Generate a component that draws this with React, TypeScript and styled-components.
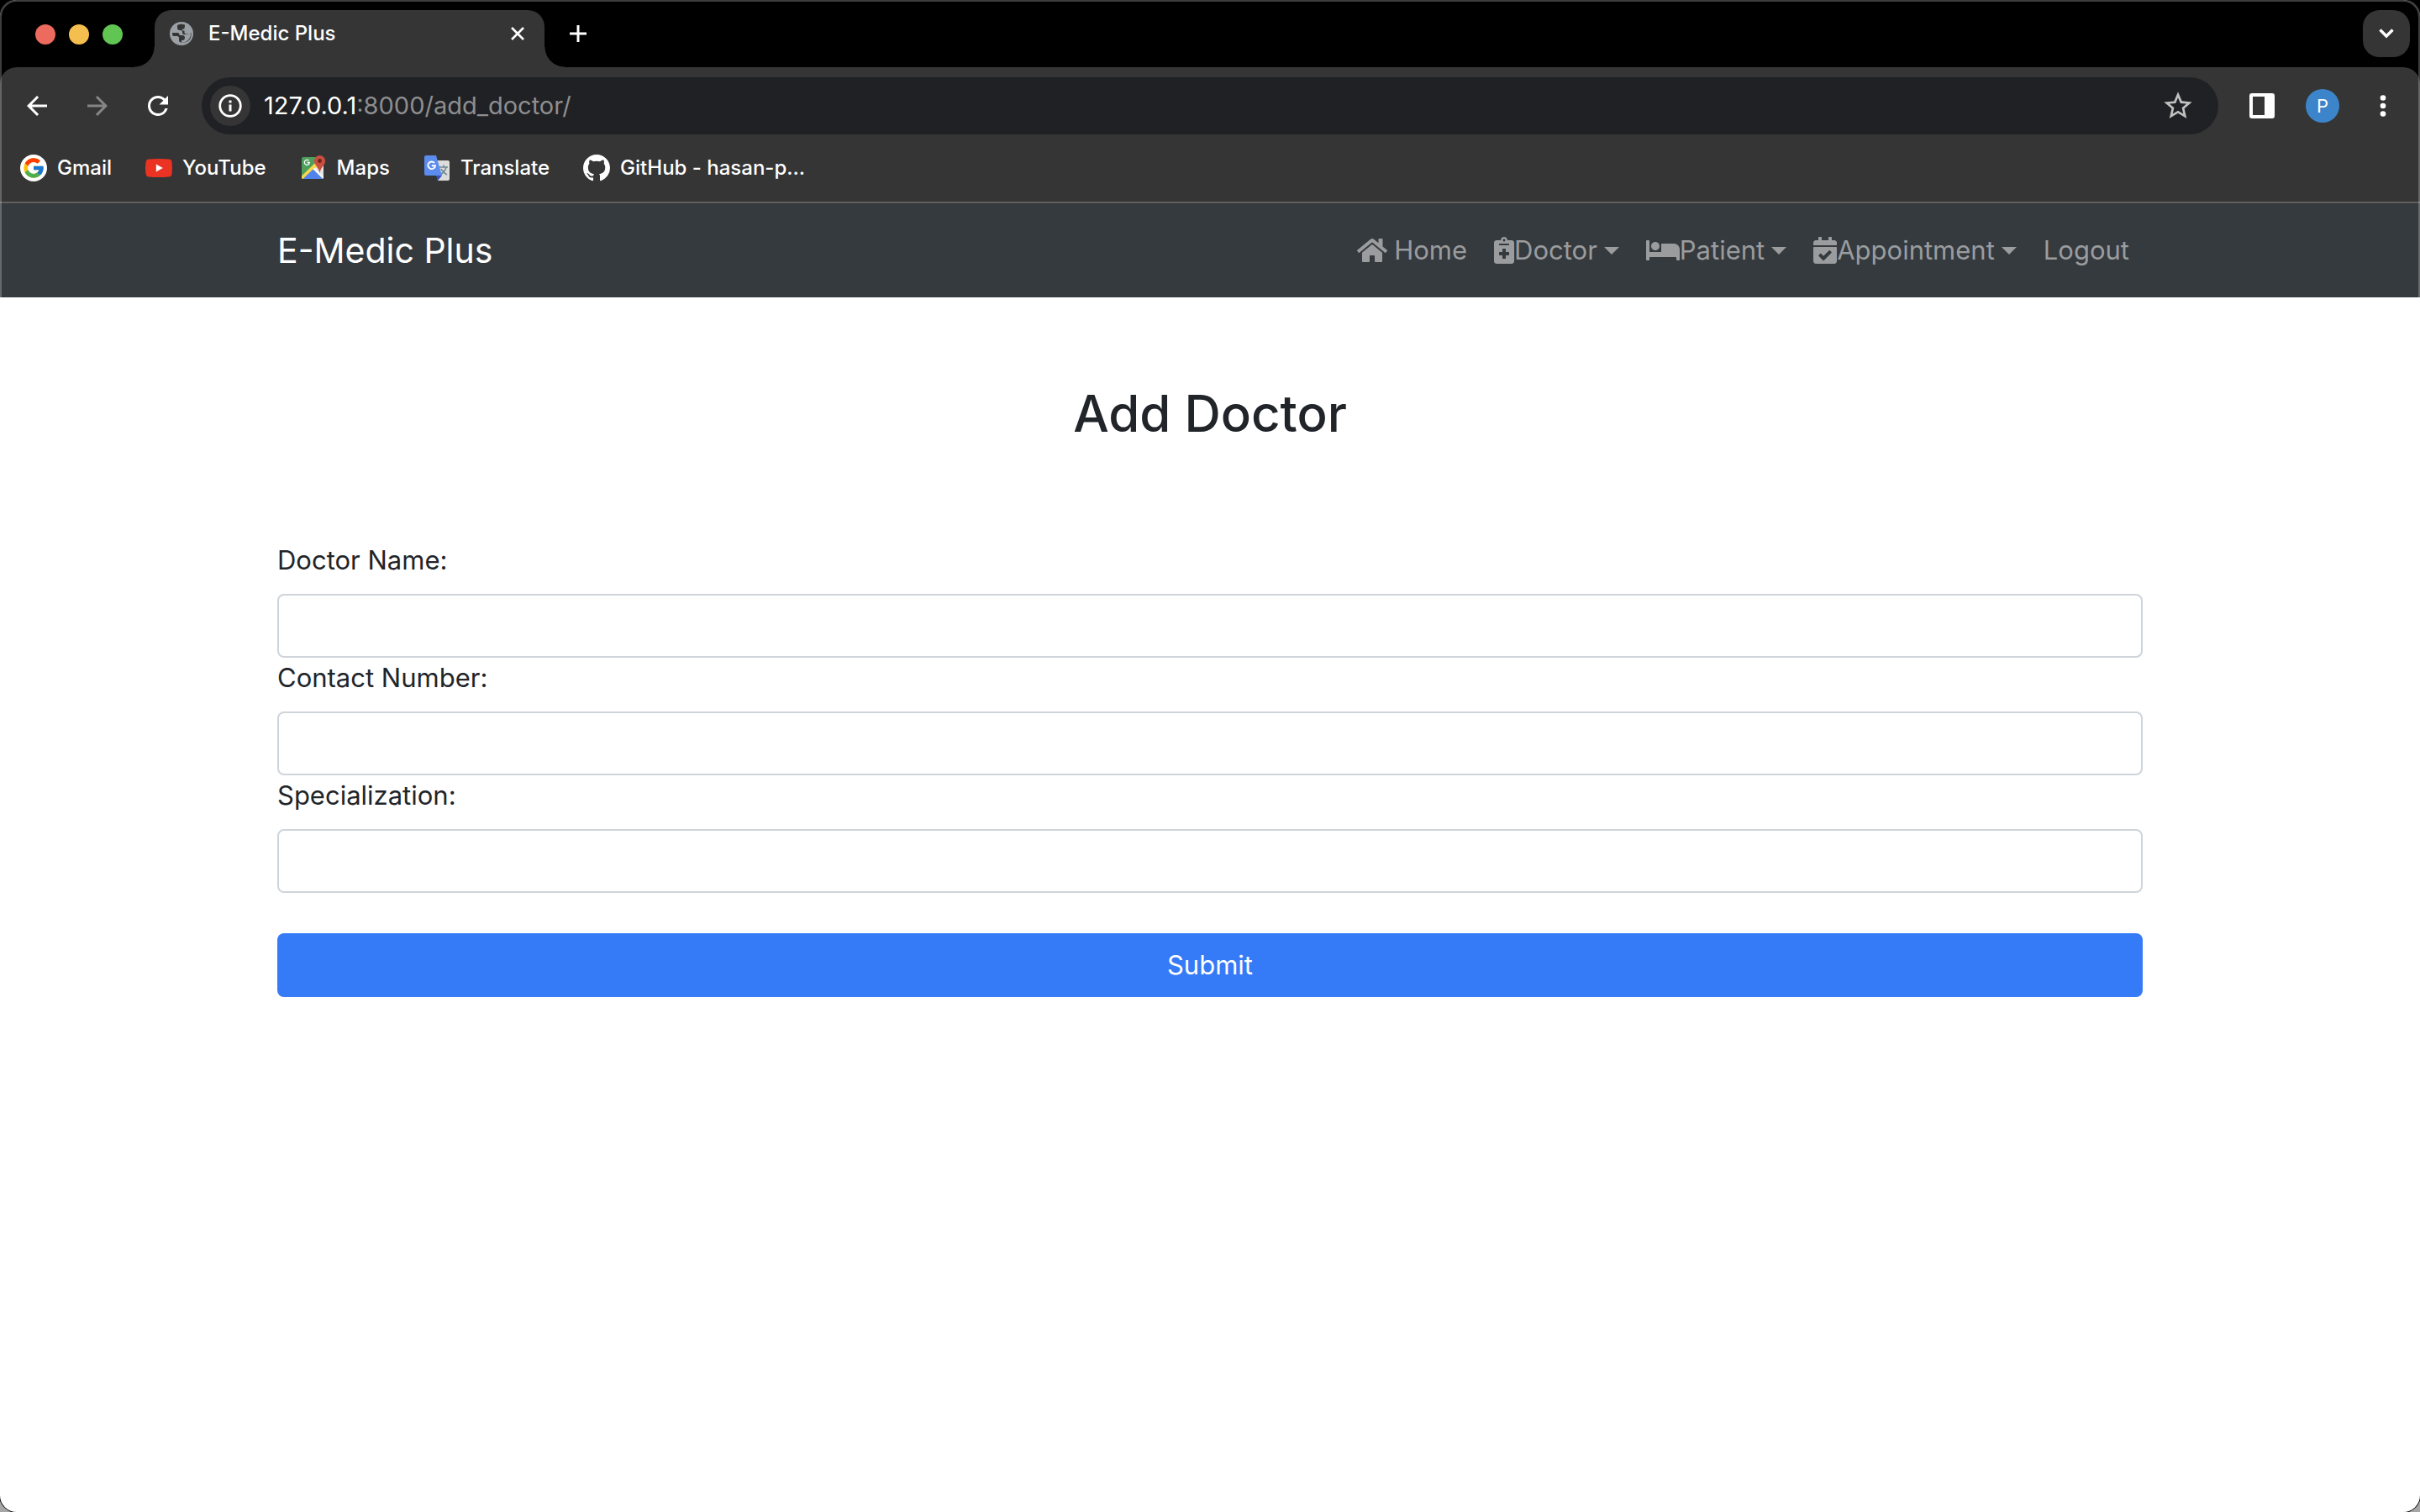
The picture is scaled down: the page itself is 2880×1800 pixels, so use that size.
import React from "react";
import styled, { createGlobalStyle } from "styled-components";
import { FaHome, FaNotesMedical, FaBed, FaCalendarCheck } from "react-icons/fa";
import { FcGoogle } from "react-icons/fc";
import { MdArrowBack, MdArrowForward, MdRefresh, MdStarBorder } from "react-icons/md";

const GlobalStyle = createGlobalStyle`
  *, *::before, *::after { box-sizing: border-box; }
  body {
    margin: 0;
    background: linear-gradient(#000 50%, #a6a6a6 50%);
    color: #212529;
    font-family: Inter, "Liberation Sans", sans-serif;
    font-size: 31px;
    line-height: 48px;
  }
  button, input { font: inherit; color: inherit; }
  button { border: 0; padding: 0; background: none; cursor: pointer; }
  a { color: inherit; text-decoration: none; }
  svg { display: block; flex: none; }
`;

const Window = styled.div`
  position: relative;
  display: flex;
  flex-direction: column;
  min-height: 100vh;
  border-radius: 20px;
  overflow: hidden;
  background: #fff;
  box-shadow: 0 0 0 1px #111;
  &::after {
    content: "";
    position: absolute;
    inset: 0;
    border: 2px solid rgba(255, 255, 255, 0.24);
    border-radius: 20px;
    pointer-events: none;
  }
`;

const Chrome = styled.header`
  background: #000;
  color: #fff;
`;

const TabStrip = styled.div`
  display: flex;
  align-items: center;
  height: 80px;
  padding: 12px 12px 0 42px;
`;

const Lights = styled.div`
  display: flex;
  gap: 16px;
  margin-right: 38px;
  padding-bottom: 10px;
`;

const Light = styled.button<{ $color: string }>`
  width: 24px;
  height: 24px;
  border-radius: 50%;
  background: ${(p) => p.$color};
`;

const Tab = styled.div`
  position: relative;
  display: flex;
  align-items: center;
  gap: 18px;
  width: 464px;
  height: 68px;
  padding: 0 24px 12px 18px;
  border-radius: 20px 20px 0 0;
  background: #353535;
  font-size: 24px;
  font-weight: 500;
  line-height: 32px;
  &::before, &::after {
    content: "";
    position: absolute;
    bottom: 0;
    width: 24px;
    height: 24px;
  }
  &::before {
    right: 100%;
    background: radial-gradient(circle at 0 0, transparent 23px, #353535 24px);
  }
  &::after {
    left: 100%;
    background: radial-gradient(circle at 100% 0, transparent 23px, #353535 24px);
  }
`;

const TabTitle = styled.span`
  flex: 1;
`;

const NewTab = styled.button`
  margin-left: 30px;
  padding-bottom: 12px;
`;

const TabSearch = styled.button`
  display: grid;
  place-items: center;
  width: 56px;
  height: 56px;
  margin: 0 0 12px auto;
  border-radius: 20px;
  background: #353535;
`;

const Toolbar = styled.div`
  display: flex;
  align-items: center;
  height: 92px;
  padding: 0 26px;
  border-radius: 20px 20px 0 0;
  background: #353535;
`;

const NavButtons = styled.div`
  display: flex;
  gap: 36px;
  margin-right: 34px;
`;

const ToolButton = styled.button<{ $dim?: boolean }>`
  display: grid;
  place-items: center;
  width: 36px;
  height: 36px;
  color: ${(p) => (p.$dim ? "#868686" : "#fff")};
`;

const AddressBar = styled.div`
  display: flex;
  flex: 1;
  align-items: center;
  height: 68px;
  padding: 0 28px 0 10px;
  border-radius: 34px;
  background: #202124;
  color: #fff;
  font-size: 29px;
  line-height: 40px;
`;

const SiteInfo = styled.button`
  display: grid;
  place-items: center;
  width: 48px;
  height: 48px;
  margin-right: 16px;
  border-radius: 50%;
  background: #353535;
`;

const Address = styled.div`
  flex: 1;
`;

const AddressPath = styled.span`
  color: #8e8e90;
`;

const StarButton = styled.button`
  color: #c1c1c1;
`;

const Actions = styled.div`
  display: flex;
  align-items: center;
  gap: 34px;
  margin-left: 34px;
`;

const Avatar = styled.button`
  width: 40px;
  height: 40px;
  border-radius: 50%;
  background: #3c85cb;
  color: #fff;
  font-size: 22px;
  line-height: 40px;
`;

const Bookmarks = styled.nav`
  display: flex;
  align-items: flex-start;
  gap: 40px;
  height: 70px;
  padding: 12px 24px 0;
  border-bottom: 2px solid #5f5f5f;
  background: #353535;
`;

const Bookmark = styled.a`
  display: flex;
  align-items: center;
  gap: 12px;
  font-size: 24px;
  font-weight: 500;
  line-height: 32px;
`;

const GoogleDisc = styled.span`
  display: grid;
  place-items: center;
  width: 32px;
  height: 32px;
  border-radius: 50%;
  background: #fff;
`;

const Container = styled.div`
  width: 100%;
  max-width: 2280px;
  margin: 0 auto;
  padding: 0 30px;
`;

const Navbar = styled.nav`
  padding: 16px 0;
  background: #353a3e;
`;

const NavbarInner = styled(Container)`
  display: flex;
  align-items: center;
  justify-content: space-between;
`;

const Brand = styled.a`
  color: #fff;
  font-size: 41px;
  line-height: 60px;
`;

const NavList = styled.ul`
  display: flex;
  margin: 0;
  padding: 0;
  list-style: none;
`;

const NavLink = styled.a<{ $iconWidth?: number; $gap?: boolean }>`
  display: flex;
  align-items: center;
  padding: 16px;
  color: #9a9c9e;
  & > svg {
    width: ${(p) => p.$iconWidth}px;
    height: 32px;
    margin-right: ${(p) => (p.$gap ? "8px" : "0")};
  }
`;

const Caret = styled.span`
  margin-left: 8px;
  border-top: 9px solid;
  border-left: 9px solid transparent;
  border-right: 9px solid transparent;
`;

const Title = styled.h1`
  margin: 100px 0 112px;
  font-size: 60px;
  font-weight: 500;
  line-height: 77px;
  text-align: center;
`;

const Field = styled.div`
  display: flex;
  flex-direction: column;
  gap: 16px;
`;

const Input = styled.input`
  width: 100%;
  height: 76px;
  padding: 12px 24px;
  border: 2px solid #ced4da;
  border-radius: 8px;
  background: #fff;
  outline: none;
`;

const Submit = styled.button`
  width: 100%;
  height: 76px;
  margin-top: 48px;
  border-radius: 8px;
  background: #357af6;
  color: #fff;
`;

const Globe = () => (
  <svg width="28" height="28" viewBox="0 0 28 28" aria-hidden="true">
    <circle cx="14" cy="14" r="14" fill="#9aa0a6" />
    <path
      d="M16 3C14 2.600 11 3 9 4v3c0 2 1 3 3 3h1c1 0 2 1 2 2v1c0 1 1 2 2 2h4c2 0 3-1 4-2 .5 6-4 12-11 12v-3h1c2 0 3-1 3-3s-1-3-3-3h-2c-1 0-2-1-2-2s-1-1-2-1H3c0 1 0 3 1 4h5c1 0 2 1 2 2v4c1 1 3 2 5 2 7-1 10-5 9.500-12-1 1-2 1.500-3 1.500h-3c-1 0-2-1-2-2v-2h-2c-1 0-1-2 0-2h1c1 0 1.500-2 1.500-5z"
      fill="#353535"
    />
  </svg>
);

const CloseIcon = () => (
  <svg width="16" height="16" viewBox="0 0 16 16" stroke="#fff" strokeWidth="2.6" aria-hidden="true">
    <path d="M1 1l14 14M15 1L1 15" />
  </svg>
);

const PlusIcon = () => (
  <svg width="20" height="20" viewBox="0 0 20 20" stroke="#fff" strokeWidth="3" aria-hidden="true">
    <path d="M10 0v20M0 10h20" />
  </svg>
);

const ChevronIcon = () => (
  <svg width="18" height="12" viewBox="0 0 18 12" fill="none" stroke="#fff" strokeWidth="3.4" aria-hidden="true">
    <path d="M1.5 1.5L9 9l7.5-7.5" />
  </svg>
);

const InfoIcon = () => (
  <svg width="28" height="28" viewBox="0 0 28 28" aria-hidden="true">
    <circle cx="14" cy="14" r="12.3" fill="none" stroke="#fff" strokeWidth="2.8" />
    <path d="M12.500 12.500h3v8h-3zM12.500 7.500h3v3h-3z" fill="#fff" />
  </svg>
);

const PanelIcon = () => (
  <svg width="30" height="30" viewBox="0 0 30 30" aria-hidden="true">
    <path fillRule="evenodd" d="M3 0h24a3 3 0 0 1 3 3v24a3 3 0 0 1-3 3H3a3 3 0 0 1-3-3V3a3 3 0 0 1 3-3zM4 4v22h14V4z" fill="#fff" />
  </svg>
);

const DotsIcon = () => (
  <svg width="8" height="28" viewBox="0 0 8 28" fill="#fff" aria-hidden="true">
    <circle cx="4" cy="4.5" r="3.3" />
    <circle cx="4" cy="14" r="3.3" />
    <circle cx="4" cy="23.5" r="3.3" />
  </svg>
);

const StarIcon = () => (
  <MdStarBorder size={40} />
);

const YouTubeIcon = () => (
  <svg width="32" height="32" viewBox="0 0 32 32" aria-hidden="true">
    <path d="M4 5.500Q16 4.300 28 5.500q3 .3 3.500 3.500.9 7 0 14-.5 3.200-3.500 3.500-12 1.200-24 0Q1 26.200.5 23-.4 16 .5 9 1 5.800 4 5.500z" fill="#ea3323" />
    <path d="M12.800 11.500v9l8-4.500z" fill="#fff" />
  </svg>
);

const MapsIcon = () => (
  <svg width="32" height="32" viewBox="0 0 32 32" aria-hidden="true">
    <rect x="2" y="3" width="26" height="26" rx="2" fill="#4f9f5c" />
    <path d="M15 17L28 7v20z" fill="#e4e4e4" />
    <path d="M2 25.500L19 9l3.500 3.500L5 29H3l-1-1z" fill="#f7d84a" />
    <path d="M18 15.500L28 26v2l-1 1L15 17.500z" fill="#f4f4f4" />
    <path d="M3.500 29L15.500 17.500 27 29z" fill="#5283ec" />
    <path d="M10.500 7.300a3 3 0 1 0 .8 2.200H8.600" fill="none" stroke="#fff" strokeWidth="1.3" />
    <path d="M23.500 1a6.600 6.600 0 0 1 6.600 6.600c0 5-5 7-6.600 14.400-1.600-7.400-6.600-9.400-6.600-14.400A6.600 6.600 0 0 1 23.500 1z" fill="#c94f40" />
    <circle cx="23.5" cy="7.5" r="2.4" fill="#6f2218" />
  </svg>
);

const TranslateIcon = () => (
  <svg width="32" height="32" viewBox="0 0 32 32" aria-hidden="true">
    <path d="M13 7h16a2 2 0 0 1 2 2v20a2 2 0 0 1-2 2H17z" fill="#dcdcdc" />
    <path d="M19 15h10M24 12.500V15M27 15c-1 4-4 7-7 9M21 17c1 3 4 5 7 7" fill="none" stroke="#6f8894" strokeWidth="1.6" />
    <path d="M15 25h7l-5 6z" fill="#3551b6" />
    <path d="M3 1h12l7 24H3a2 2 0 0 1-2-2V3a2 2 0 0 1 2-2z" fill="#5c8cee" />
    <path d="M13 10a4.300 4.300 0 1 0 1 3.300h-4.200" fill="none" stroke="#fff" strokeWidth="1.9" />
  </svg>
);

const GitHubIcon = () => (
  <svg width="32" height="32" viewBox="0 0 16 16" fill="#fff" aria-hidden="true">
    <path d="M8 0C3.58 0 0 3.58 0 8c0 3.54 2.29 6.53 5.47 7.59.4.07.55-.17.55-.38 0-.19-.01-.82-.01-1.49-2.01.37-2.53-.49-2.69-.94-.09-.23-.48-.94-.82-1.13-.28-.15-.68-.52-.01-.53.63-.01 1.08.58 1.23.82.72 1.21 1.87.87 2.33.66.07-.52.28-.87.51-1.07-1.78-.2-3.64-.89-3.64-3.95 0-.87.31-1.59.82-2.15-.08-.2-.36-1.02.08-2.12 0 0 .67-.21 2.2.82.64-.18 1.32-.27 2-.27.68 0 1.36.09 2 .27 1.53-1.04 2.2-.82 2.2-.82.44 1.1.16 1.92.08 2.12.51.56.82 1.27.82 2.15 0 3.07-1.87 3.75-3.65 3.95.29.25.54.73.54 1.48 0 1.07-.01 1.93-.01 2.2 0 .21.15.46.55.38A8.013 8.013 0 0 0 16 8c0-4.42-3.58-8-8-8z" />
  </svg>
);

const bookmarks = [
  { label: "Gmail", icon: <GoogleDisc><FcGoogle size={28} /></GoogleDisc> },
  { label: "YouTube", icon: <YouTubeIcon /> },
  { label: "Maps", icon: <MapsIcon /> },
  { label: "Translate", icon: <TranslateIcon /> },
  { label: "GitHub - hasan-p...", icon: <GitHubIcon /> },
];

const links = [
  { label: "Home", icon: <FaHome />, iconWidth: 36, gap: true },
  { label: "Doctor", icon: <FaNotesMedical />, iconWidth: 24, menu: true },
  { label: "Patient", icon: <FaBed />, iconWidth: 40, menu: true },
  { label: "Appointment", icon: <FaCalendarCheck />, iconWidth: 28, menu: true },
  { label: "Logout" },
];

const fields = [
  { id: "doctor-name", label: "Doctor Name:" },
  { id: "contact-number", label: "Contact Number:" },
  { id: "specialization", label: "Specialization:" },
];

export default function App() {
  return (
    <>
      <GlobalStyle />
      <Window>
        <Chrome>
          <TabStrip>
            <Lights>
              <Light $color="#ed6a5e" aria-label="Close window" />
              <Light $color="#f5bf4f" aria-label="Minimize window" />
              <Light $color="#61c554" aria-label="Zoom window" />
            </Lights>
            <Tab>
              <Globe />
              <TabTitle>E-Medic Plus</TabTitle>
              <button aria-label="Close tab"><CloseIcon /></button>
            </Tab>
            <NewTab aria-label="New tab"><PlusIcon /></NewTab>
            <TabSearch aria-label="Search tabs"><ChevronIcon /></TabSearch>
          </TabStrip>
          <Toolbar>
            <NavButtons>
              <ToolButton aria-label="Back"><MdArrowBack size={36} /></ToolButton>
              <ToolButton aria-label="Forward" $dim><MdArrowForward size={36} /></ToolButton>
              <ToolButton aria-label="Reload"><MdRefresh size={36} /></ToolButton>
            </NavButtons>
            <AddressBar>
              <SiteInfo aria-label="Site information"><InfoIcon /></SiteInfo>
              <Address>127.0.0.1<AddressPath>:8000/add_doctor/</AddressPath></Address>
              <StarButton aria-label="Bookmark this page"><StarIcon /></StarButton>
            </AddressBar>
            <Actions>
              <ToolButton aria-label="Side panel"><PanelIcon /></ToolButton>
              <Avatar aria-label="Profile">P</Avatar>
              <ToolButton aria-label="Menu"><DotsIcon /></ToolButton>
            </Actions>
          </Toolbar>
          <Bookmarks aria-label="Bookmarks">
            {bookmarks.map((b) => (
              <Bookmark key={b.label} href="#">{b.icon}{b.label}</Bookmark>
            ))}
          </Bookmarks>
        </Chrome>
        <Navbar aria-label="Main">
          <NavbarInner>
            <Brand href="#">E-Medic Plus</Brand>
            <NavList>
              {links.map((l) => (
                <li key={l.label}>
                  <NavLink href="#" $iconWidth={l.iconWidth} $gap={l.gap}>
                    {l.icon}{l.label}{l.menu && <Caret />}
                  </NavLink>
                </li>
              ))}
            </NavList>
          </NavbarInner>
        </Navbar>
        <Container as="main">
          <Title>Add Doctor</Title>
          <form onSubmit={(e) => e.preventDefault()}>
            {fields.map((f) => (
              <Field key={f.id}>
                <label htmlFor={f.id}>{f.label}</label>
                <Input id={f.id} type="text" />
              </Field>
            ))}
            <Submit type="submit">Submit</Submit>
          </form>
        </Container>
      </Window>
    </>
  );
}
